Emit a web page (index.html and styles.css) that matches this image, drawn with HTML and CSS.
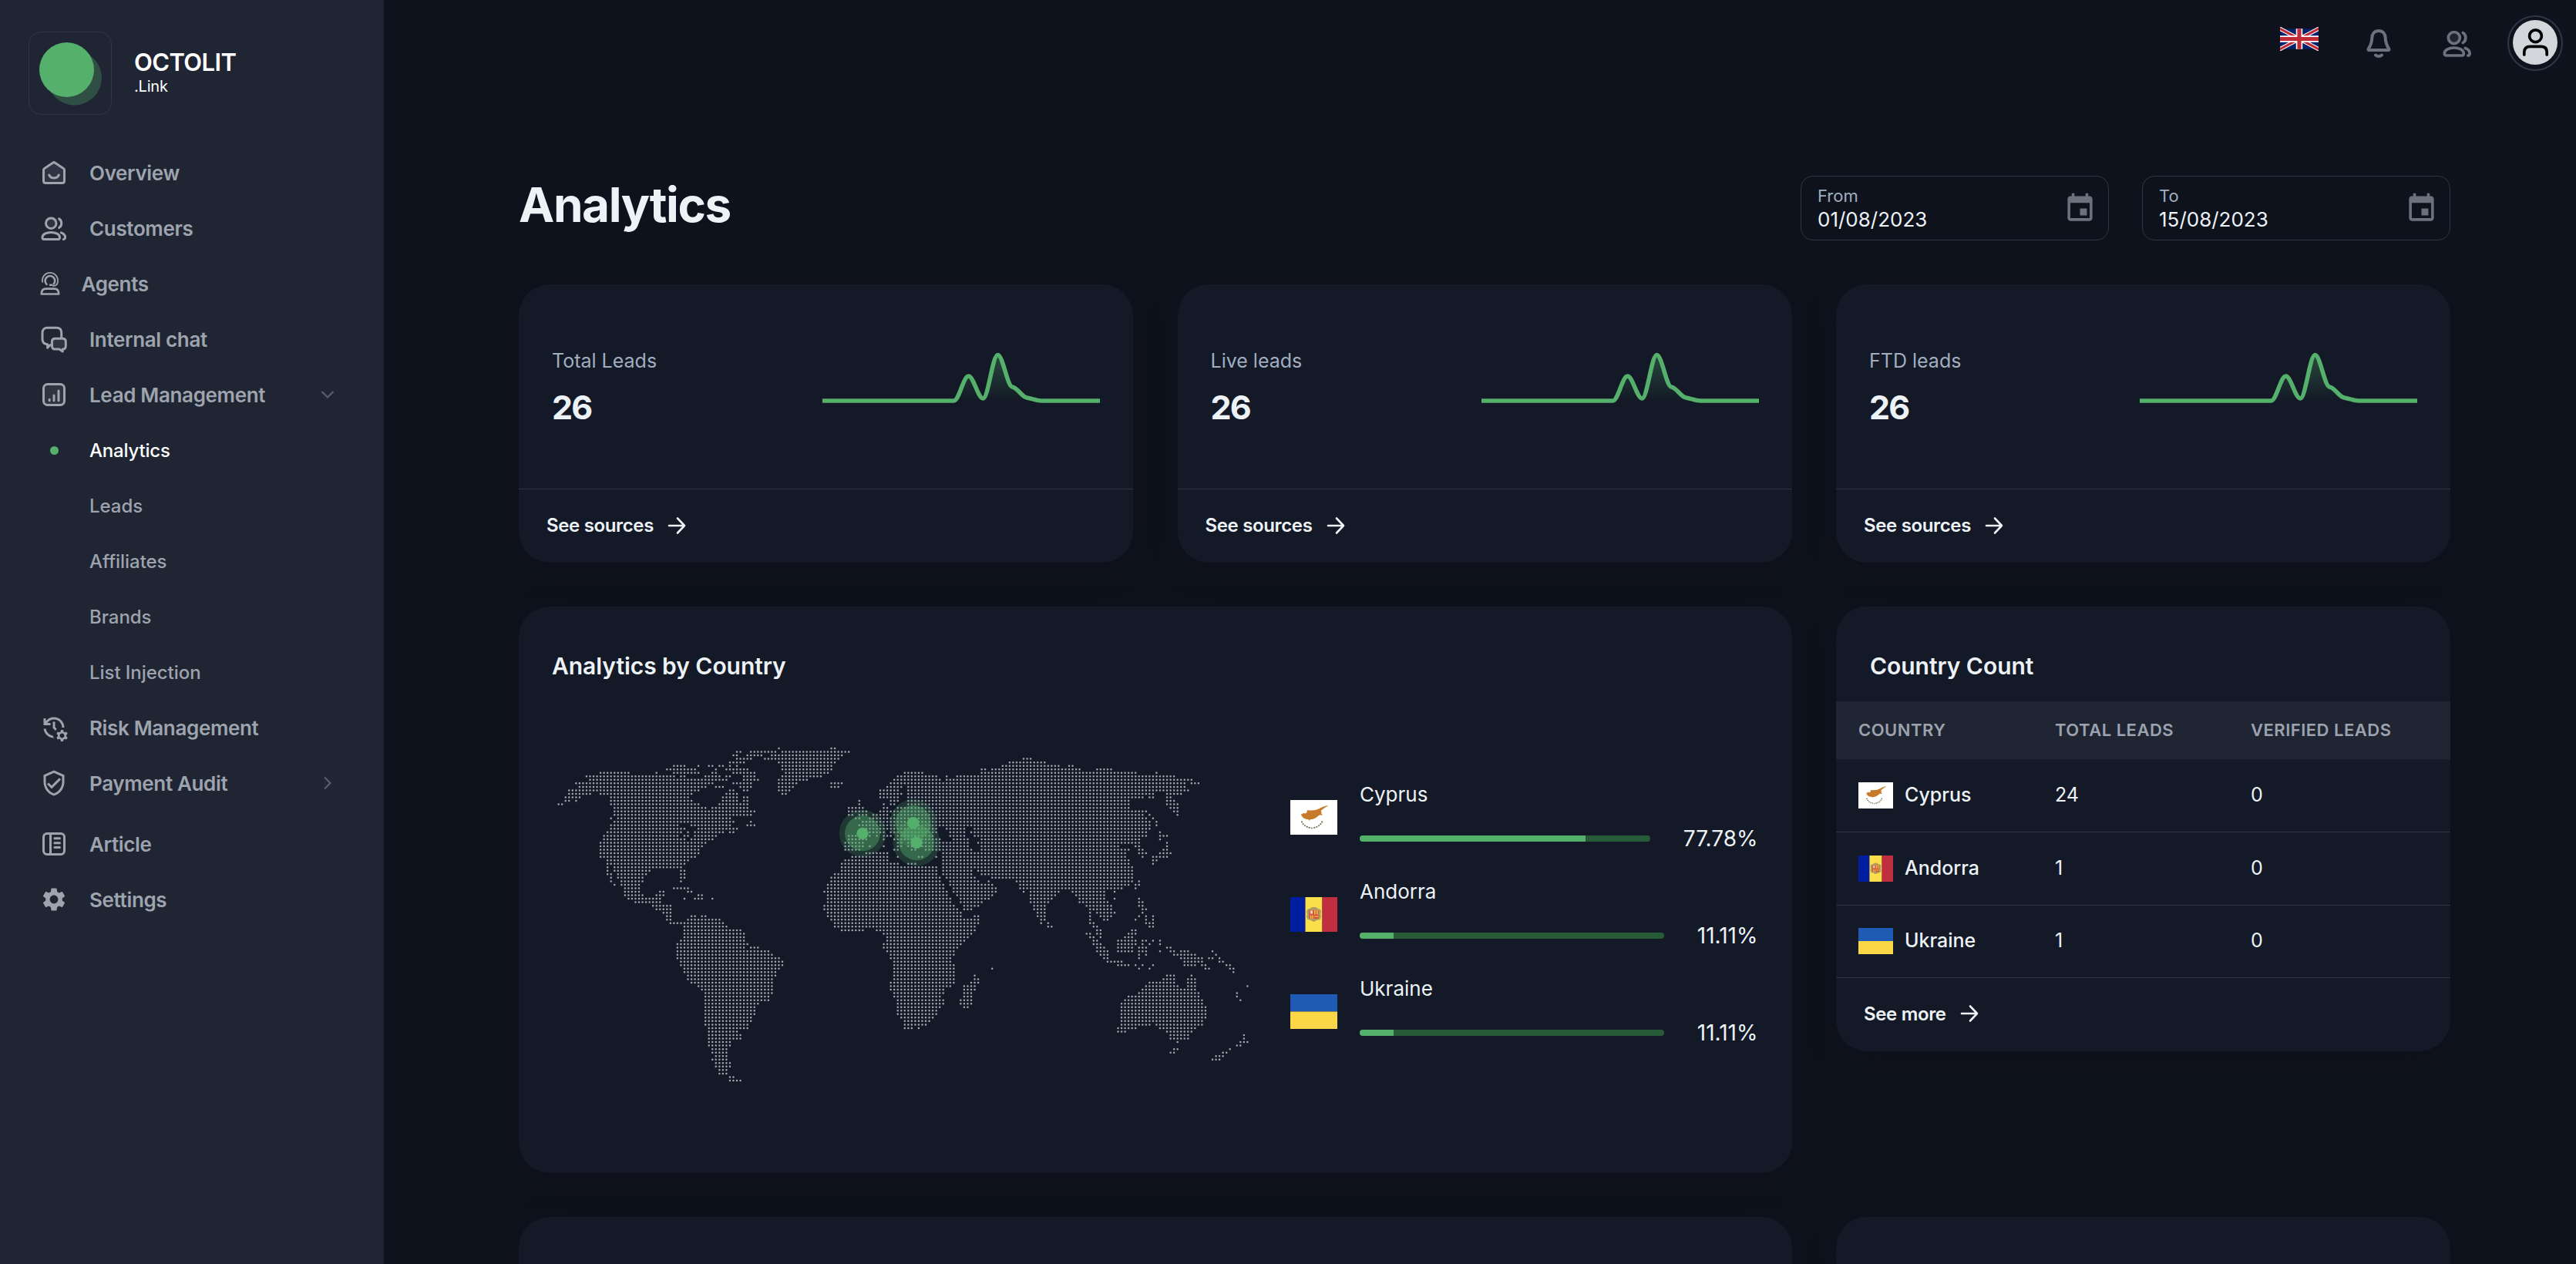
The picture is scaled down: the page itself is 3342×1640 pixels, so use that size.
FILE: index.html
```html
<!DOCTYPE html>
<html lang="en">
<head>
<meta charset="utf-8">
<title>Analytics | Octolit.Link</title>
<link rel="stylesheet" href="styles.css">
</head>
<body>
<svg class="sprite" aria-hidden="true">
  <symbol id="i-users" viewBox="0 0 24 24"><circle cx="9.5" cy="7.8" r="4.5" class="tint"/><path d="M2 20c0-2.8 3.6-4.4 7.5-4.4S17 17.2 17 20c0 .9-.4 1.6-1.3 1.6H3.3C2.4 21.6 2 20.9 2 20z"/><path d="M16.4 3.9c1.3.8 2.1 2.200 2.100 3.900s-.8 3.100-2.100 3.900"/><path d="M18.200 15.900c1.900.7 3.500 2.200 3.500 4 0 1-.5 1.700-1.500 1.700"/></symbol>
  <symbol id="i-arrow" viewBox="0 0 24 24"><path d="M2 12h20M13 2.500 22 12l-9 9.500"/></symbol>
  <symbol id="i-event" viewBox="0 0 24 24"><path d="M17 12h-5v5h5v-5zM16 1v2H8V1H6v2H5c-1.110 0-1.990.9-1.990 2L3 19c0 1.100.890 2 2 2h14c1.100 0 2-.9 2-2V5c0-1.100-.9-2-2-2h-1V1h-2zm3 18H5V8h14v11z"/></symbol>
  <symbol id="f-cyprus" viewBox="0 0 61 45" preserveAspectRatio="none"><path fill="#fff" d="M0 0h61v45H0z"/><path fill="#c87a2b" d="M12 19l2-1 1.500.500 1-1.500 3 .5 2-1.500.200-2.800 4 .3 7-.5 4-1.500 5-2.500 7-2.300-.5 1-4.500 3-4 3 .800 2-.500 1.500 1.500 1.500v1l-3-.500-2.500 1.500-3 2.500-3.500 1.500-4 .5-.5 2-1.200-2-3.500-.5-3.500-1.500-2-2.500-1-2.500z"/><g fill="none" stroke="#5f6b3a" stroke-width="1.700" stroke-dasharray="1.900 1.300"><path d="M14.500 27.500c2 5 6.500 8 13.500 9"/><path d="M41.500 27.500c-2 5-6.500 8-13 9"/></g></symbol>
  <symbol id="f-andorra" viewBox="0 0 61 45" preserveAspectRatio="none"><path fill="#001fa0" d="M0 0h19.500v45H0z"/><path fill="#fadf4b" d="M19.500 0h22v45h-22z"/><path fill="#c12e40" d="M41.500 0H61v45H41.500z"/><path fill="#b39a63" d="M22 16l4-1.500 2-1.500h5l2 1.500 4 1.500 1 3-1 3 1 3-1.500 4-4 1-4 2-4-2-4-1-1.500-4 1-3-1-3z"/><path fill="#d6533a" d="M24.500 17h12v11h-12z"/><path fill="#f0d9b8" d="M26 17.500h3v4h-3z"/><path fill="#f4c94a" d="M31 17h1.600v5.500H31zM34 17h1.500v5.500H34zM26 23.500h1.300V28H26zM28.500 23.500h1.300V28h-1.300zM31 24.500h5v1.200h-5z"/></symbol>
  <symbol id="f-ukraine" viewBox="0 0 61 45" preserveAspectRatio="none"><path fill="#1f5ab4" d="M0 0h61v22.500H0z"/><path fill="#fbd748" d="M0 22.500h61V45H0z"/></symbol>
  <symbol id="sparkline" viewBox="0 0 360 80">
    <path fill="url(#spark-fill)" d="M170.500 69C177.100 69 182.900 37 189.500 37S201.800 66 208.400 66S220.800 9.500 227.400 9.500S239.700 50 246.300 51S258.700 64 265.300 65S277.600 69 284.200 69z"/>
    <path class="spark-line" d="M0 69H170.500C177.100 69 182.900 37 189.500 37S201.800 66 208.400 66S220.800 9.500 227.400 9.500S239.700 50 246.300 51S258.700 64 265.300 65S277.600 69 284.200 69H360"/>
  </symbol>
  <linearGradient id="spark-fill" x1="0" y1="0" x2="0" y2="1"><stop offset="0" stop-color="#55b06c" stop-opacity=".32"/><stop offset="1" stop-color="#55b06c" stop-opacity="0"/></linearGradient>
</svg>

<div class="app">
  <aside class="sidebar">
    <div class="brand">
      <div class="brand-mark"><svg width="106" height="106" viewBox="0 0 106 106"><circle cx="58.500" cy="59" r="35.500" fill="#55b06c" opacity=".3"/><circle cx="48.500" cy="48.500" r="35.500" fill="#55b06c"/></svg></div>
      <div class="brand-text"><div class="brand-name">OCTOLIT</div><div class="brand-sub">.Link</div></div>
    </div>
    <nav class="nav">
      <a class="nav-item"><svg class="icon" viewBox="0 0 24 24"><path class="tint" d="M3 9.500c0-.5.200-.8.600-1L11.300 3.300c.4-.3 1-.3 1.400 0l7.700 5.200c.4.200.6.5.6 1V19.200c0 1.200-.6 1.800-1.800 1.800H4.800C3.600 21 3 20.400 3 19.200z"/><path d="M7.800 14c.9 1.800 2.300 2.700 4.200 2.700s3.300-.9 4.200-2.700"/></svg><span>Overview</span></a>
      <a class="nav-item"><svg class="icon"><use href="#i-users"/></svg><span>Customers</span></a>
      <a class="nav-item"><svg class="icon icon-agent" viewBox="0 0 24 24"><path d="M5.400 10.600a6.700 6.700 0 1 1 13.200-.3c0 2.200-1.400 3.400-4 3.700"/><path class="bold" d="M9 12.600a4.200 4.200 0 1 1 6.200-.4M12 13.200h1.500"/><path class="bold" d="M4.500 21c0-3 1.500-4.600 4-4.600h7c2.500 0 4 1.600 4 4.600z"/></svg><span>Agents</span></a>
      <a class="nav-item"><svg class="icon" viewBox="0 0 24 24"><path d="M8.800 17 6.400 19.500v-3C3.600 16.200 2 14.700 2 12V6.600C2 3.800 3.600 2.200 6.400 2.200h7.700c2.800 0 4.400 1.600 4.400 4.400v4"/><path class="tint" d="M13 11.500h6.500c1.700 0 2.700 1 2.700 2.700V18c0 1.700-1 2.700-2.700 2.700v2l-3-2H13c-1.700 0-2.700-1-2.700-2.700v-3.800c0-1.700 1-2.700 2.700-2.700z"/></svg><span>Internal chat</span></a>
      <a class="nav-item"><svg class="icon" viewBox="0 0 24 24"><rect class="tint" x="3" y="3" width="18" height="18" rx="3.500"/><path d="M8.100 17.200v-1M12 17.200v-4.500M16 17.200V8.700"/></svg><span>Lead Management</span><svg class="chevron" viewBox="0 0 18 18"><path d="m1.500 5 7.500 7.500L16.500 5"/></svg></a>
      <a class="nav-item nav-sub active"><i class="dot"></i><span>Analytics</span></a>
      <a class="nav-item nav-sub"><i></i><span>Leads</span></a>
      <a class="nav-item nav-sub"><i></i><span>Affiliates</span></a>
      <a class="nav-item nav-sub"><i></i><span>Brands</span></a>
      <a class="nav-item nav-sub"><i></i><span>List Injection</span></a>
      <a class="nav-item"><svg class="icon solid" viewBox="0 0 24 24"><path d="m22.690 18.370 1.140-1-1-1.730-1.450.490c-.32-.27-.68-.48-1.080-.63L20 14h-2l-.3 1.490c-.4.150-.76.360-1.080.630l-1.450-.49-1 1.730 1.140 1c-.08.500-.08.760 0 1.260l-1.140 1 1 1.730 1.450-.49c.32.270.68.480 1.080.630L18 24h2l.3-1.490c.4-.15.76-.36 1.080-.63l1.450.490 1-1.730-1.140-1c.08-.51.080-.77 0-1.270zM19 21c-1.100 0-2-.9-2-2s.9-2 2-2 2 .9 2 2-.9 2-2 2zM11 7v5.410l2.360 2.360 1.040-1.790-1.400-1.390V7h-2zm10 5c0-4.970-4.030-9-9-9-2.830 0-5.350 1.320-7 3.360V4H3v6h6V8H6.260C7.530 6.190 9.630 5 12 5c3.860 0 7 3.140 7 7h2zm-10.140 6.910c-2.990-.49-5.350-2.900-5.780-5.910H3.060c.5 4.500 4.310 8 8.940 8h.07l-1.210-2.090z"/></svg><span>Risk Management</span></a>
      <a class="nav-item"><svg class="icon solid" viewBox="0 0 24 24"><path d="M12 1 3 5v6c0 5.550 3.840 10.740 9 12 5.160-1.260 9-6.450 9-12V5l-9-4zm7 10c0 4.520-2.980 8.690-7 9.930-4.020-1.240-7-5.410-7-9.930V6.300l7-3.110 7 3.110V11zm-11.590.590L6 13l4 4 8-8-1.410-1.420L10 14.170z"/></svg><span>Payment Audit</span><svg class="chevron" viewBox="0 0 18 18"><path d="M5 1.500 12.500 9 5 16.500"/></svg></a>
      <a class="nav-item nav-spaced"><svg class="icon" viewBox="0 0 24 24"><rect x="3" y="3" width="18" height="18" rx="3"/><path d="M9 3v18M12.600 7.200H17M12.600 11.100H17M12.600 15H17"/></svg><span>Article</span></a>
      <a class="nav-item"><svg class="icon solid" viewBox="0 0 24 24"><path d="M19.140 12.940c.04-.3.060-.61.060-.94 0-.32-.02-.64-.07-.94l2.030-1.580c.18-.14.230-.41.120-.61l-1.920-3.320c-.12-.22-.37-.29-.59-.22l-2.390.960c-.5-.38-1.030-.7-1.620-.94l-.36-2.540c-.04-.24-.24-.41-.48-.41h-3.840c-.24 0-.43.170-.47.410l-.36 2.540c-.59.240-1.130.570-1.620.940l-2.390-.96c-.22-.08-.47 0-.59.220L2.740 8.870c-.12.210-.08.470.120.610l2.030 1.580c-.05.300-.09.630-.09.940s.02.640.070.940l-2.030 1.580c-.18.140-.23.410-.12.610l1.920 3.320c.12.220.370.290.590.220l2.390-.96c.5.380 1.030.700 1.620.940l.36 2.540c.05.240.240.410.480.410h3.840c.24 0 .44-.17.470-.41l.36-2.540c.59-.24 1.130-.56 1.620-.94l2.390.960c.22.080.470 0 .59-.22l1.920-3.320c.12-.22.070-.47-.12-.61l-2.010-1.580zM12 15.600c-1.980 0-3.600-1.620-3.600-3.600s1.620-3.600 3.600-3.600 3.600 1.620 3.600 3.600-1.620 3.600-3.600 3.600z"/></svg><span>Settings</span></a>
    </nav>
  </aside>

  <div class="content">
    <header class="topbar">
      <svg class="lang-flag" viewBox="0 0 50 31"><path fill="#012169" d="M0 2.300h50v26.400H0z"/><path stroke="#fff" stroke-width="5.200" d="M-5-.34 55 31.340M55-.34-5 31.340"/><path stroke="#c12b37" stroke-width="3.200" d="M-5-.34 55 31.340M55-.34-5 31.340"/><path stroke="#fff" stroke-width="8.500" d="M25 2.300v26.400M0 15.500h50"/><path stroke="#c12b37" stroke-width="5.200" d="M25 2.300v26.400M0 15.500h50"/></svg>
      <svg class="bell" viewBox="0 0 34 38"><path d="M17 3c5.500 0 8.500 4 8.700 9.200.2 6.300 1.700 9.800 4.500 14 .7 1 .3 1.800-1 1.800H4.800c-1.300 0-1.700-.8-1-1.800 2.800-4.200 4.300-7.700 4.500-14C8.500 7 11.500 3 17 3zM13 34.500c2.300 1.900 5.700 1.900 8 0"/></svg>
      <svg class="people"><use href="#i-users"/></svg>
      <div class="avatar"><svg viewBox="0 0 58 58"><circle cx="29.500" cy="20.700" r="7.900"/><path d="M14.800 45v-3c0-5 2.700-7.700 7.700-7.700h14c5 0 7.700 2.700 7.700 7.700v3"/></svg></div>
    </header>

    <main class="page">
      <div class="page-head">
        <h1>Analytics</h1>
        <div class="dates">
          <label class="date"><span class="date-text"><small>From</small><b>01/08/2023</b></span><svg><use href="#i-event"/></svg></label>
          <label class="date"><span class="date-text"><small>To</small><b>15/08/2023</b></span><svg><use href="#i-event"/></svg></label>
        </div>
      </div>

      <div class="grid">
        <section class="card stat">
          <div class="stat-body"><div><div class="stat-label">Total Leads</div><div class="stat-value">26</div></div><svg class="spark"><use href="#sparkline"/></svg></div>
          <a class="card-link"><span>See sources</span><svg><use href="#i-arrow"/></svg></a>
        </section>
        <section class="card stat">
          <div class="stat-body"><div><div class="stat-label">Live leads</div><div class="stat-value">26</div></div><svg class="spark"><use href="#sparkline"/></svg></div>
          <a class="card-link"><span>See sources</span><svg><use href="#i-arrow"/></svg></a>
        </section>
        <section class="card stat">
          <div class="stat-body"><div><div class="stat-label">FTD leads</div><div class="stat-value">26</div></div><svg class="spark"><use href="#sparkline"/></svg></div>
          <a class="card-link"><span>See sources</span><svg><use href="#i-arrow"/></svg></a>
        </section>

        <section class="card by-country">
          <h2>Analytics by Country</h2>
          <div class="country-body">
            <svg class="map" viewBox="48 0 2748 1440"><path id="land"/>
              <g class="pin"><circle cx="1257" cy="394" r="91"/><circle cx="1257" cy="394" r="69"/><circle cx="1257" cy="394" r="23"/></g>
              <g class="pin"><circle cx="1454" cy="353" r="91"/><circle cx="1454" cy="353" r="69"/><circle cx="1454" cy="353" r="23"/></g>
              <g class="pin"><circle cx="1467" cy="430" r="91"/><circle cx="1467" cy="430" r="69"/><circle cx="1467" cy="430" r="23"/></g>
            </svg>
            <ul class="shares">
              <li><svg class="flag-lg"><use href="#f-cyprus"/></svg><div class="share"><span class="share-name">Cyprus</span><div class="share-row"><div class="bar"><i style="width:77.78%"></i></div><span class="pct">77.78%</span></div></div></li>
              <li><svg class="flag-lg"><use href="#f-andorra"/></svg><div class="share"><span class="share-name">Andorra</span><div class="share-row"><div class="bar"><i style="width:11.11%"></i></div><span class="pct">11.11%</span></div></div></li>
              <li><svg class="flag-lg"><use href="#f-ukraine"/></svg><div class="share"><span class="share-name">Ukraine</span><div class="share-row"><div class="bar"><i style="width:11.11%"></i></div><span class="pct">11.11%</span></div></div></li>
            </ul>
          </div>
        </section>

        <section class="card count">
          <h2>Country Count</h2>
          <div class="row thead"><span>COUNTRY</span><span>TOTAL LEADS</span><span>VERIFIED LEADS</span></div>
          <div class="row"><span class="cell-country"><svg class="flag-sm"><use href="#f-cyprus"/></svg>Cyprus</span><span>24</span><span>0</span></div>
          <div class="row"><span class="cell-country"><svg class="flag-sm"><use href="#f-andorra"/></svg>Andorra</span><span>1</span><span>0</span></div>
          <div class="row"><span class="cell-country"><svg class="flag-sm"><use href="#f-ukraine"/></svg>Ukraine</span><span>1</span><span>0</span></div>
          <a class="card-link"><span>See more</span><svg><use href="#i-arrow"/></svg></a>
        </section>

        <section class="card wide"></section>
        <section class="card"></section>
      </div>
    </main>
  </div>
</div>
<script src="map.js"></script>
</body>
</html>
```
FILE: map.js
```js
// Land areas of the world map, one entry per dot row: "first-last" spans (or
// single dots) in viewBox units. Ends are snapped to the dot columns.
const ROWS = [
  "933 1138-1152",
  "769-783 824-924 946-1206",
  "756-769 810-865 906-1179",
  "769-824 878-1165 1887-1914",
  "742-796 933-1152 1832-1970",
  "524-565 620 661-674 701-715 742 769 946-1138 1805-2025 2065-2079",
  "497-606 688 729-742 756-810 946-1138 1724-1738 1765-2106 2174-2228",
  "238-347 456 524-620 674-688 756-837 960-1125 1424-1492 1724-2324 2405",
  "183-524 551-565 647-701 729-742 796-837 946-1097 1397-1547 1588 1628-2473",
  "196-729 796-851 933-1043 1384-1560 1588-2542",
  "142-674 756-824 933-1002 1138-1179 1370-1424 1438-1533 1547-2515 2542-2569",
  "156-647 688-715 783-824 933-988 1138-1165 1357-1411 1438-2515",
  "115-620 742-756 796-810 933-974 1329-1397 1438-2528",
  "115-196 238-592 729-769 947-960 1329-1411 1438-2392 2446-2501",
  "101-156 278-579 715-769 796-810 1329-1397 1438-2351 2378-2392 2446-2460",
  "101-115 142 278-592 715-769 796-810 1247 1370-1397 1438-2297 2446-2473",
  "74-88 278-620 701-810 1247 1343 1370-1384 1438-2297 2446-2487",
  "292-647 674-810 1206-1261 1343-1356 1397-2297 2460-2487",
  "292-647 661-837 1206-1233 1247-1274 1329-2365 2473-2487",
  "292-824 1206-1220 1247-1274 1302-1315 1329-1356 1384-2351 2378 2487",
  "278 305-742 1233-1247 1288-1356 1370-2365 2392",
  "292-579 592-729 742-756 824 1261-2378 2405",
  "278-537 592-742 810-837 1247-1343 1356-2378 2405",
  "278-537 551-565 620-769 1261-1547 1588-1656 1697-2378",
  "265-551 579 606-715 742-756 1261-1315 1329-1343 1370-1547 1601-1656 1684-2365 2419",
  "251-537 565-579 606-688 1206-1288 1315 1343-1370 1397-1533 1601-1656 1697-2365 2419-2446",
  "251-551 565 592-674 1206-1274 1343 1384-1411 1424-1560 1615-1670 1724-2338 2419",
  "238-647 1192-1261 1397-1411 1438-1560 1574-1670 1710-2338 2446",
  "238-633 1192-1261 1288 1343 1397-1411 1438-1465 1492-1670 1724-2256 2324-2338 2446",
  "238-620 1192-1247 1384-1397 1452-1465 1506-1533 1547-1560 1574-1684 1724-2297 2338-2351 2433-2446",
  "238-620 1274-1356 1574-2283 2338-2365 2419-2460",
  "238-606 1220-1356 1397 1479-1492 1547 1574-2283 2351 2392-2446",
  "265-579 1192-1356 1574-2297 2392-2405",
  "265-565 1179-1397 1438-1465 1574-2297 2392",
  "265 292-551 1179-1547 1574-2310",
  "265 292-429 551-565 1179-1547 1574-1684 1710-2310",
  "265-278 305-415 551-565 1152-1547 1574-1684 1724-2310",
  "278 305-402 551-565 1138-1560 1588-1697 1765-2310",
  "278 319-402 551 1138-1560 1601-1711 1751 1860-2310 2338",
  "292 319-388 1125-1574 1601-1697 1710-1765 1873-2297 2324-2338",
  "333-388 524-579 1125-1574 1615-1778 1873-2270 2324",
  "333-388 470-484 579-592 1111-1588 1615-1724 1738-1778 1887 1914-2025 2079-2201 2242",
  "333-402 456-484 620-633 1125-1588 1628-1765 1914-2011 2092-2201",
  "347-470 565 606-633 674 1125-1601 1642-1751 1914-1997 2106-2201 2242 2338",
  "374-470 1125-1601 1642-1724 1914-1984 2106-2215 2338-2351",
  "442-511 1111-1615 1656-1710 1928-1970 2133-2228 2338-2351",
  "456-511 1111-1628 1656-1684 1928-1970 2147-2228 2351-2365",
  "484-511 1125-1642 1942-1970 2147 2174-2242 2351",
  "497-511 592-606 633-647 1125-1642 1697-1710 1942-1970 2147 2188-2228 2338 2365 2392",
  "497-511 579-701 1138-1710 1956-1970 2147 2201-2215 2324 2365 2392",
  "511-715 1152-1710 1956 1984 2147-2160 2365-2392",
  "565-729 1152-1697 1984-1997 2160-2174 2378-2392",
  "565-783 1179-1261 1315-1697 2174-2188 2310-2324",
  "565-796 1343-1684 2133-2147 2174-2188 2297-2324",
  "565-796 1356-1670 2147-2160 2188 2283-2310",
  "551-796 1356-1656 2160-2174 2256-2324 2351-2365 2392 2419",
  "537-810 1343-1642 2160-2188 2256-2324 2351 2378 2419",
  "537-796 824-851 1343-1628 2174-2201 2256-2310 2338-2365 2446-2460",
  "537-892 1356-1615 2174-2215 2256-2310 2338-2365 2419 2460-2473 2501-2528 2623",
  "537-906 1370-1615 2188-2215 2338 2365 2473-2555 2637",
  "537-933 1370-1601 2201-2215 2338 2501-2582 2610-2623 2650",
  "551-947 1384-1601 2215-2270 2515-2582 2650-2664",
  "551-947 1384-1615 2256-2297 2324 2351 2392 2515-2555 2582-2596 2677-2691",
  "565-933 1384-1615 1765 2338 2378 2596-2610 2691-2705",
  "565-919 1384-1615 2705",
  "579-919 1384-1615 1697 2446-2473 2542",
  "579-906 1384-1615 1697-1710 2433-2473 2528-2555",
  "592-906 1370-1615 1684-1710 2378-2473 2528-2555",
  "620-906 1370-1601 1656-1697 2365-2487 2528-2555 2759",
  "633-906 1370-1574 1656-1697 2351-2555",
  "647-906 1384-1574 1656-1684 2338-2569 2718",
  "647-892 1384-1560 1656-1684 2297-2569 2718",
  "647-892 1397-1574 1642-1684 2283-2582 2732",
  "647-851 1397-1574 1642-1684 2270-2582",
  "647-837 1397-1560 1656-1670 2270-2596",
  "647-837 1397-1547 2270-2596",
  "647-837 1397-1547 2270-2596",
  "647-824 1411-1533 2270-2596",
  "647-824 1424-1520 2270-2582",
  "647-810 1424-1506 2270-2378 2405-2582",
  "661-810 1424-1452 1479 2256-2324 2419-2555",
  "661-769 2256-2283 2446-2542",
  "661-783 2460-2528 2746",
  "661-783 2460-2528 2746",
  "661-742 2487 2732-2759",
  "661-742 2718-2732",
  "674-729 2473-2487 2691",
  "674-729 2460-2473 2664-2677",
  "688-729 2637-2664",
  "674-729 2623-2650",
  "688-742",
  "688-742",
  "701-729",
  "701-729",
  "742-756",
  "742-783"
];
const PITCH = 13.61, LEFT = 74, TOP = 63;
const column = x => Math.round((x - LEFT) / PITCH);

let d = "";
ROWS.forEach((row, r) => {
  const y = (TOP + r * PITCH).toFixed(1);
  row.split(" ").forEach(span => {
    const [from, to = from] = span.split("-");
    for (let c = column(from); c <= column(to); c++) {
      d += `M${(LEFT + c * PITCH).toFixed(1)} ${y}h0`;
    }
  });
});
document.getElementById("land").setAttribute("d", d);
```
FILE: styles.css
```css
* { box-sizing: border-box; }
html, body { margin: 0; height: 1640px; overflow: hidden; }
body { background: #0e121c; color: #edf2f7; font-family: Inter, "Liberation Sans", sans-serif; font-size: 26px; }
h1, h2, ul { margin: 0; padding: 0; }
h1, h2 { font-weight: 600; }
ul { list-style: none; }
.sprite { position: absolute; width: 0; height: 0; }

.app { display: flex; height: 1640px; overflow: hidden; }

/* Sidebar */
.sidebar { flex: none; width: 498px; background: #1f2533; }
.brand { display: flex; align-items: center; gap: 30px; height: 188px; padding: 2px 37px 0; }
.brand-mark { width: 108px; height: 108px; border: 1px solid #2f3645; border-radius: 16px; }
.brand-mark svg { display: block; }
.brand-name { color: #fff; font-size: 31px; font-weight: 600; line-height: 34px; letter-spacing: -.600px; }
.brand-sub { color: #fff; font-size: 20px; line-height: 28px; letter-spacing: -.200px; }
.brand-text { margin-left: -1px; padding-bottom: 1px; }
.nav-item { display: flex; align-items: center; height: 72px; padding: 0 64px 0 52px; color: #9ea4ae; font-size: 26px; font-weight: 600; letter-spacing: -.350px; white-space: nowrap; }
.nav-item > :first-child { flex: none; width: 36px; margin-right: 28px; }
.nav-item > .icon-agent:first-child { margin: 0 23px 0 -5.500px; }
.nav-sub { font-size: 24px; font-weight: 500; letter-spacing: -.050px; }
.nav-spaced { margin-top: 7px; }
.active { color: #fff; letter-spacing: -.200px; }
.dot { display: flex; justify-content: center; }
.dot::before { content: ""; width: 11px; height: 11px; border-radius: 50%; background: #55b06c; }
.icon, .people { height: 36px; fill: none; stroke: #9ea4ae; stroke-width: 2; stroke-linecap: round; stroke-linejoin: round; }
.tint { fill: #9ea4ae; fill-opacity: .12; }
.icon-agent { stroke-width: 1.200; }
.icon-agent .bold { stroke-width: 1.700; }
.solid { fill: #9ea4ae; stroke: none; }
.chevron { width: 18px; height: 18px; margin-left: auto; fill: none; stroke: #565d6b; stroke-width: 2.200; }

/* Top bar */
.content { flex: 1; min-width: 0; }
.topbar { display: flex; align-items: center; justify-content: flex-end; height: 111px; padding-right: 17px; }
.lang-flag { width: 50px; height: 31px; margin: 0 61px 10px 0; }
.bell { width: 34px; height: 38px; margin-right: 65px; fill: none; stroke: #6c717d; stroke-width: 4; stroke-linecap: round; stroke-linejoin: round; }
.people { width: 40px; height: 40px; margin-right: 45px; stroke: #6c717d; stroke-width: 2.200; }
.avatar { width: 72px; height: 72px; padding: 4.500px; border: 2.500px solid #2d3748; border-radius: 50%; }
.avatar svg { display: block; width: 58px; height: 58px; border-radius: 50%; background: #d3d6db; fill: none; stroke: #000; stroke-width: 3.700; stroke-linecap: round; }

/* Page */
.page { padding: 117px 163px 0 175px; }
.page-head { display: flex; justify-content: space-between; align-items: center; height: 84px; margin-bottom: 57px; }
h1 { font-size: 62px; line-height: 74px; padding-bottom: 9px; letter-spacing: -1.400px; font-weight: 650; }
.dates { display: flex; gap: 43px; }
.date { display: flex; align-items: center; justify-content: space-between; width: 400px; height: 84px; padding: 0 15px 0 21px; border: 1px solid #2f3541; border-radius: 16px; }
.date svg { width: 43px; height: 43px; fill: #6c717d; }
.date-text { display: flex; flex-direction: column; }
.date small { color: #a0aec0; font-size: 22px; line-height: 30px; }
.date b { font-weight: 400; font-size: 26px; line-height: 32px; }

.grid { display: grid; grid-template-columns: repeat(3, 1fr); gap: 57px 57.500px; align-items: start; }
.card { min-height: 160px; border-radius: 40px; background: #131926; box-shadow: 0 10px 36px rgba(16, 12, 26, .3); overflow: hidden; }
.stat-body { display: flex; align-items: center; justify-content: space-between; height: 265px; padding: 0 43px 0 43px; }
.stat-label { color: #a0aec0; font-size: 25px; line-height: 40px; }
.stat-value { font-size: 43px; font-weight: 650; line-height: 52px; padding: 14px 0 2px; letter-spacing: -1.800px; }
.spark { width: 360px; height: 80px; margin-bottom: 22px; }
.spark-line { fill: none; stroke: #55b06c; stroke-width: 5.600; }
.card-link { display: flex; align-items: center; gap: 18px; height: 96px; padding: 0 0 2px 36px; border-top: 1px solid #2d3442; font-size: 24px; font-weight: 600; letter-spacing: -.350px; }
.card-link svg { width: 24px; height: 24px; fill: none; stroke: #edf2f7; stroke-width: 2.600; stroke-linecap: round; stroke-linejoin: round; }

h2 { font-size: 30px; line-height: 36px; letter-spacing: -.050px; }
.by-country, .wide { grid-column: span 2; }
.by-country { height: 735px; padding: 59px 44px 0 43px; }
.country-body { display: flex; margin-top: 68px; }
.map { flex: none; width: 916px; height: 480px; }
#land { fill: none; stroke: #a2a8b3; stroke-width: 7.500; stroke-linecap: round; }
.pin { fill: #55b06c; fill-opacity: .2; }
.pin :nth-child(2) { fill-opacity: .4; }
.pin :nth-child(3) { fill-opacity: 1; }
.shares { flex: 1; margin: 62px 0 0 42px; }
.shares li { display: flex; height: 126px; }
.flag-lg { width: 61px; height: 45px; margin: 26px 29px 0 0; }
.share { flex: 1; }
.share-name { display: block; line-height: 38px; font-size: 26px; }
.share-row { display: flex; align-items: center; gap: 43px; height: 34px; margin-top: 21px; }
.bar { flex: 1; height: 8px; border-radius: 4px; background: #275a36; overflow: hidden; }
.bar i { display: block; height: 100%; background: #55b06c; }
.pct { font-size: 28px; }

.count h2 { padding: 59px 44px 28px; }
.row { display: grid; grid-template-columns: 255px 254px 1fr; align-items: center; height: 94.300px; padding: 0 0 2px 29px; border-top: 1px solid #2d3442; font-size: 25px; }
.row.thead { height: 75px; border: 0; background: #1f2533; color: #9ca3ae; font-size: 22px; font-weight: 600; letter-spacing: .500px; }
.row.thead + .row { border: 0; }
.cell-country { display: flex; align-items: center; gap: 15px; font-weight: 500; }
.flag-sm { width: 45px; height: 34px; margin-top: 2px; }
```
